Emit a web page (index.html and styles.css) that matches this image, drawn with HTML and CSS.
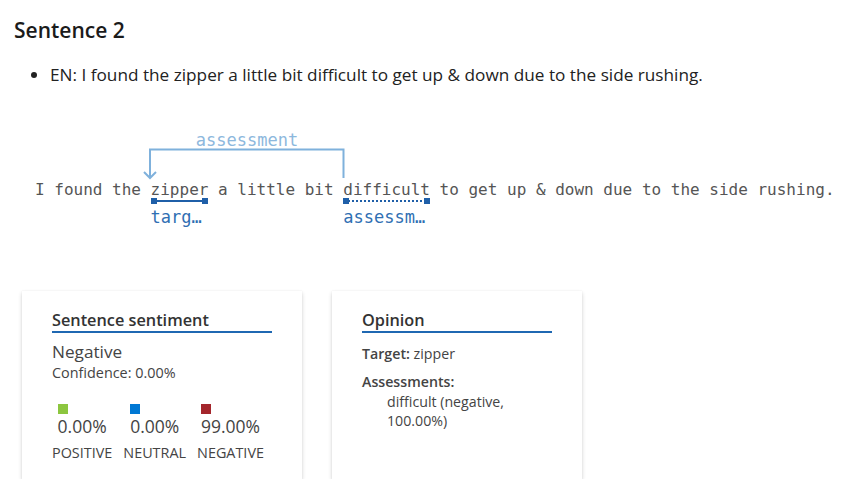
FILE: index.html
```html
<!DOCTYPE html>
<html>
<head>
<meta charset="utf-8">
<link rel="stylesheet" href="styles.css">
</head>
<body>
<h2 class="title">Sentence 2</h2>
<ul class="src">
  <li>EN: I found the zipper a little bit difficult to get up &amp; down due to the side rushing.</li>
</ul>
<div class="diagram">
  <svg class="arcs" width="832" height="120" viewBox="0 0 832 120">
    <text x="233" y="26" class="arc-label" text-anchor="middle">assessment</text>
    <polyline points="136,58 136,29.5 329.5,29.5 329.5,58" fill="none" stroke="#7fb1dc" stroke-width="2"/>
    <polyline points="130,52 136,58 142,52" fill="none" stroke="#7fb1dc" stroke-width="2"/>
  </svg>
  <div class="line">I found the <span class="tok">zipper<span class="mark solid"></span><span class="lbl">targ…</span></span> a little bit <span class="tok">difficult<span class="mark dotted"></span><span class="lbl">assessm…</span></span> to get up &amp; down due to the side rushing.</div>
</div>
<div class="cards">
  <section class="card card-sent">
    <h3 class="card-title">Sentence sentiment</h3>
    <div class="sent-label">Negative</div>
    <div class="conf">Confidence: 0.00%</div>
    <div class="scores">
      <div class="score">
        <div class="score-top"><span class="sq pos"></span><span class="pct">0.00%</span></div>
        <div class="score-name">POSITIVE</div>
      </div>
      <div class="score">
        <div class="score-top"><span class="sq neu"></span><span class="pct">0.00%</span></div>
        <div class="score-name">NEUTRAL</div>
      </div>
      <div class="score">
        <div class="score-top"><span class="sq neg"></span><span class="pct">99.00%</span></div>
        <div class="score-name">NEGATIVE</div>
      </div>
    </div>
  </section>
  <section class="card card-op">
    <h3 class="card-title">Opinion</h3>
    <div class="op-row"><b>Target:</b> zipper</div>
    <div class="op-row op-ass"><b>Assessments:</b></div>
    <div class="op-item">difficult (negative, 100.00%)</div>
  </section>
</div>
</body>
</html>
```
FILE: styles.css
```css
html, body {
  margin: 0;
  padding: 0;
  background: #ffffff;
}
body {
  padding: 0 14px;
  font-family: "Open Sans", "Noto Sans", sans-serif;
  color: #222;
}
.title {
  margin: 16px 0 0;
  font-size: 21px;
  line-height: 28px;
  font-weight: 600;
  color: #1b1b1b;
}
.src {
  margin: 19px 0 0;
  padding-left: 36px;
  font-size: 17.2px;
  line-height: 24px;
  color: #222;
}
.diagram {
  position: relative;
  margin-top: 33px;
  height: 120px;
  padding-left: 21px;
  box-sizing: border-box;
  padding-top: 60px;
}
.arcs {
  position: absolute;
  left: 0;
  top: 0;
}
.arc-label {
  font-family: "DejaVu Sans Mono", monospace;
  font-size: 17px;
  fill: #8db8dd;
}
.line {
  font-family: "DejaVu Sans Mono", monospace;
  font-size: 16px;
  line-height: 20px;
  color: #555;
  white-space: pre;
}
.tok {
  position: relative;
}
.mark {
  position: absolute;
  left: 0;
  right: 0;
  top: 20px;
  height: 0;
}
.mark.solid {
  border-top: 2px solid #1f5fa8;
}
.mark.dotted {
  border-top: 2px dotted #1f5fa8;
}
.mark::before,
.mark::after {
  content: "";
  position: absolute;
  top: -4px;
  width: 6px;
  height: 6px;
  background: #1f5fa8;
}
.mark::before { left: 0; }
.mark::after { right: 0; }
.lbl {
  position: absolute;
  left: 0;
  top: 27px;
  font-size: 17px;
  line-height: 20px;
  color: #2f6fb3;
}
.cards {
  display: flex;
  gap: 30px;
  margin: 51px 0 0 8px;
}
.card {
  box-sizing: border-box;
  height: 188px;
  padding: 18px 30px 0;
  background: #fff;
  box-shadow: 0 1.5px 4px rgba(0, 0, 0, 0.18), 0 0 1px rgba(0, 0, 0, 0.08);
  color: #444;
}
.card-sent { width: 280px; }
.card-op { width: 250px; }
.card-title {
  margin: 0;
  font-size: 16.3px;
  line-height: 22px;
  font-weight: 600;
  color: #333;
  border-bottom: 2px solid #1f68b2;
}
.sent-label {
  margin-top: 8px;
  font-size: 17.2px;
  line-height: 22px;
}
.conf {
  font-size: 14.4px;
  line-height: 20px;
}
.scores {
  display: flex;
  gap: 11px;
  margin-top: 21px;
}
.score {
  display: flex;
  flex-direction: column;
  align-items: center;
}
.score-top {
  display: flex;
  flex-direction: column;
  align-items: flex-start;
}
.sq {
  width: 10px;
  height: 10px;
}
.sq.pos { background: #8cc63f; }
.sq.neu { background: #0078d4; }
.sq.neg { background: #a4262c; }
.pct {
  font-size: 17.5px;
  line-height: 24px;
}
.score-name {
  margin-top: 5px;
  font-size: 14.4px;
  line-height: 20px;
}
.op-row {
  margin-top: 11px;
  font-size: 14.2px;
  line-height: 20px;
}
.op-row b { font-weight: 600; }
.op-ass { margin-top: 8px; }
.op-item {
  padding-left: 25px;
  font-size: 14.2px;
  line-height: 19px;
}
```
